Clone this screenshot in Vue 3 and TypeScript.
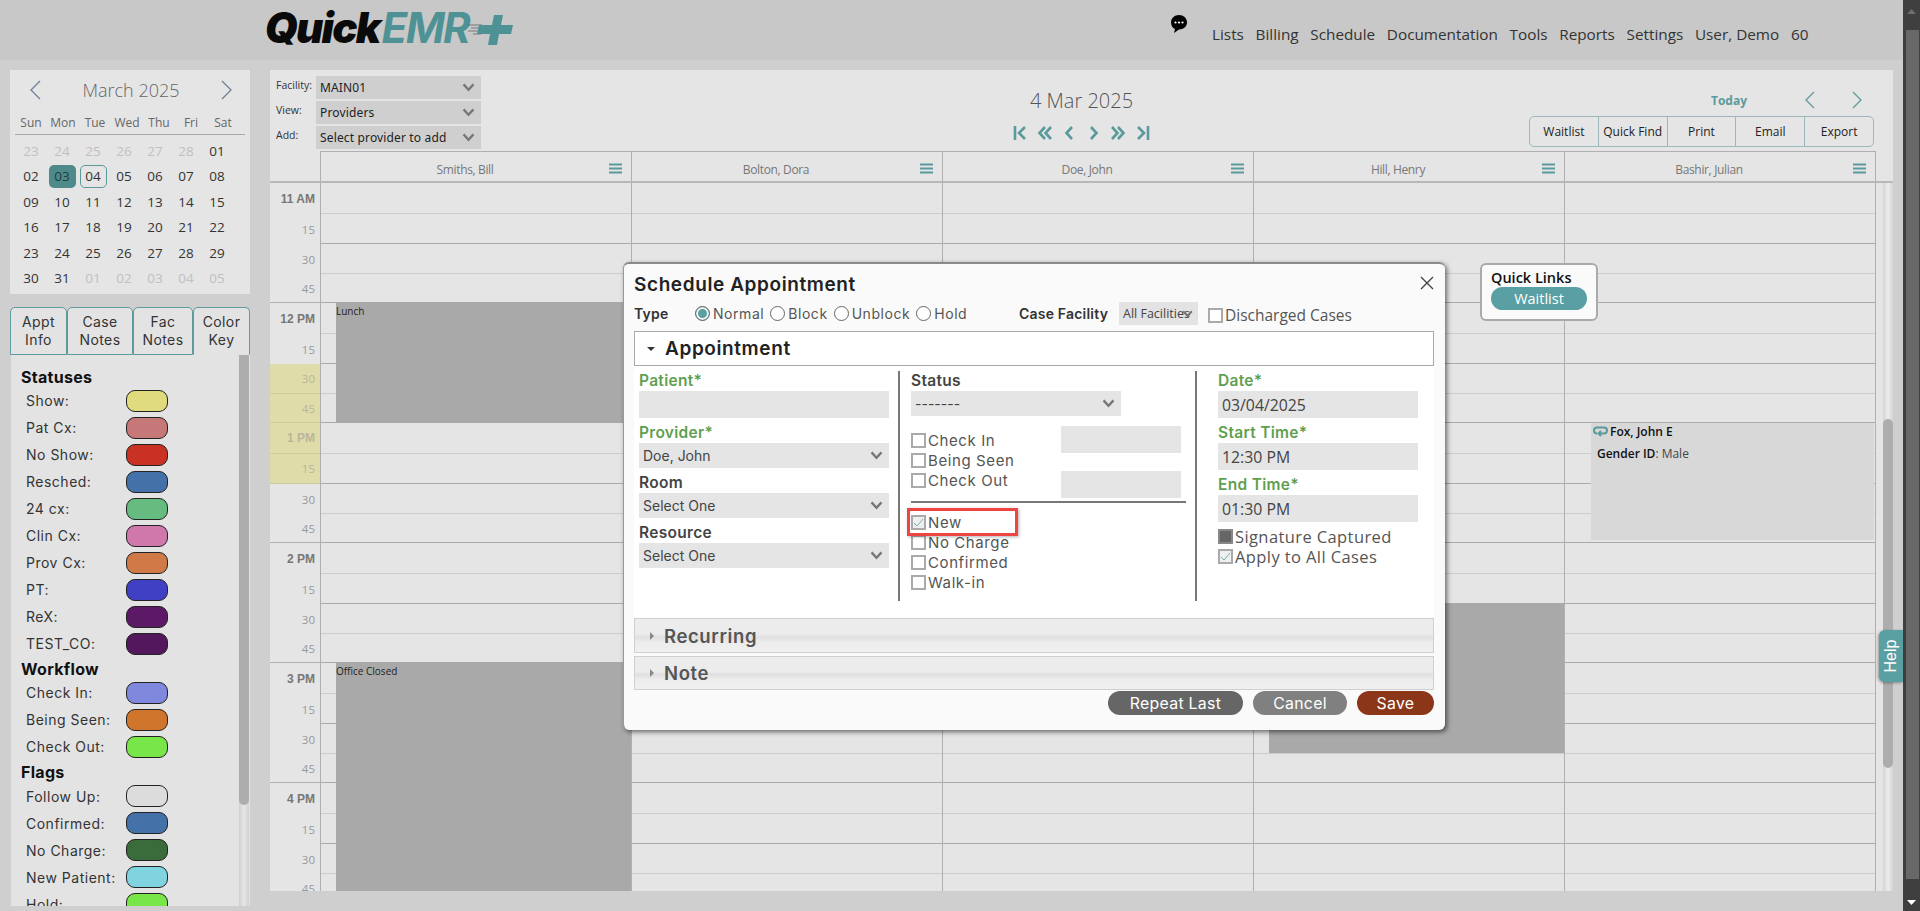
<script setup lang="ts">
const navItems: string[] = ['Lists', 'Billing', 'Schedule', 'Documentation', 'Tools', 'Reports', 'Settings', 'User, Demo', '60']
const weekDays: string[] = ['Sun', 'Mon', 'Tue', 'Wed', 'Thu', 'Fri', 'Sat']
const prev = ['23', '24', '25', '26', '27', '28']
const cur = Array.from({ length: 31 }, (_, i) => String(i + 1).padStart(2, '0'))
const next = ['01', '02', '03', '04', '05']
const days = [
  ...prev.map((d) => ({ d, cls: 'muted' })),
  ...cur.map((d) => ({ d, cls: d === '03' ? 'sel' : d === '04' ? 'today' : '' })),
  ...next.map((d) => ({ d, cls: 'muted' })),
]
const tabs: string[][] = [['Appt', 'Info'], ['Case', 'Notes'], ['Fac', 'Notes'], ['Color', 'Key']]
const keyGroups = [
  { title: 'Statuses', items: [['Show:', '#e0dc7e'], ['Pat Cx:', '#c67777'], ['No Show:', '#c93223'], ['Resched:', '#4471a8'], ['24 cx:', '#66bb80'], ['Clin Cx:', '#d077ab'], ['Prov Cx:', '#d07a48'], ['PT:', '#4040c4'], ['ReX:', '#5c1a66'], ['TEST_CO:', '#52175c']] },
  { title: 'Workflow', items: [['Check In:', '#8088dd'], ['Being Seen:', '#d0762c'], ['Check Out:', '#78e648']] },
  { title: 'Flags', items: [['Follow Up:', '#dcdcdc'], ['Confirmed:', '#4471a8'], ['No Charge:', '#3a6b3a'], ['New Patient:', '#7fd4e0'], ['Hold:', '#78e648']] },
]
const toolButtons: string[] = ['Waitlist', 'Quick Find', 'Print', 'Email', 'Export']
const providers: string[] = ['Smiths, Bill', 'Bolton, Dora', 'Doe, John', 'Hill, Henry', 'Bashir, Julian']
const hours: string[] = ['11 AM', '12 PM', '1 PM', '2 PM', '3 PM', '4 PM']
const minutes: string[] = ['', '15', '30', '45']
const rows = Array.from({ length: 24 }, (_, i) => ({
  label: i % 4 === 0 ? hours[i / 4] : minutes[i % 4],
  isHour: i % 4 === 0,
  lineCls: ['l', 'd', 'l', 'd'][i % 4],
  h: [31, 30, 30, 29][i % 4],
  yellow: i >= 6 && i <= 9,
}))
const types: string[] = ['Normal', 'Block', 'Unblock', 'Hold']
const statusChecks: string[] = ['Check In', 'Being Seen', 'Check Out']
const flagChecks: string[] = ['No Charge', 'Confirmed', 'Walk-in']
</script>

<template>
  <div class="page">
    <svg class="defs" width="0" height="0">
      <symbol id="chev" viewBox="0 0 14 10"><path d="M1.500 1.500 7 7.500l5.500-6" fill="none" stroke="#777" stroke-width="2.600" /></symbol>
    </svg>
    <div class="content">
      <header class="topbar">
        <div class="logo">
          <span class="quick">Quick</span><span class="emr">EMR</span>
          <svg class="plus" width="46" height="32" viewBox="0 0 46 32">
            <path d="M0 11h14M3 14h12M0 17h12M5 20h8" stroke="#555" stroke-width="1.200" opacity=".7" />
            <path d="M26 1h9l-2 10h12l-2 9H31l-2 11h-9l2-11H9l2-9h13z" fill="#4f9295" />
          </svg>
        </div>
        <svg class="chat" width="18" height="20" viewBox="0 0 18 20">
          <path d="M9 1C4.500 1 1 4.200 1 8.500c0 3 1.600 5.300 4 6.500L4 19l5-3.600c4.500 0 8-3 8-7C17 4.200 13.500 1 9 1z" fill="#000" />
          <circle cx="5.500" cy="8.500" r="1.100" fill="#fff" /><circle cx="9" cy="8.500" r="1.100" fill="#fff" /><circle cx="12.500" cy="8.500" r="1.100" fill="#fff" />
        </svg>
        <nav class="nav"><a v-for="n in navItems" :key="n">{{ n }}</a></nav>
      </header>

      <div class="body">
        <aside class="side">
          <section class="cal">
            <div class="cal-title">
              <svg width="14" height="22" viewBox="0 0 14 22"><path d="M12 2 3 11l9 9" fill="none" stroke="#6f7f9a" stroke-width="1.300" /></svg>
              <span>March 2025</span>
              <svg width="14" height="22" viewBox="0 0 14 22"><path d="m2 2 9 9-9 9" fill="none" stroke="#6f7f9a" stroke-width="1.300" /></svg>
            </div>
            <div class="cal-week"><span v-for="w in weekDays" :key="w">{{ w }}</span></div>
            <div class="cal-days"><span v-for="(c, i) in days" :key="i" :class="c.cls">{{ c.d }}</span></div>
          </section>

          <div class="tabs">
            <div v-for="(t, i) in tabs" :key="i" class="tab" :class="{ on: i === 3 }"><span>{{ t[0] }}</span><span>{{ t[1] }}</span></div>
          </div>
          <section class="key">
            <div class="key-list">
              <template v-for="g in keyGroups" :key="g.title">
                <h3>{{ g.title }}</h3>
                <div v-for="it in g.items" :key="it[0]" class="key-row">
                  <span>{{ it[0] }}</span>
                  <i :style="{ background: it[1] }"></i>
                </div>
              </template>
            </div>
            <div class="key-track"><div class="key-thumb"></div></div>
          </section>
        </aside>

        <main class="main">
          <div class="toolbar">
            <div class="filters">
              <div class="filter"><label>Facility:</label><div class="pick">MAIN01<svg><use href="#chev" /></svg></div></div>
              <div class="filter"><label>View:</label><div class="pick">Providers<svg><use href="#chev" /></svg></div></div>
              <div class="filter"><label>Add:</label><div class="pick">Select provider to add<svg><use href="#chev" /></svg></div></div>
            </div>
            <div class="datebox">
              <div class="date">4 Mar 2025</div>
              <div class="pager">
                <svg width="16" height="16" viewBox="-1 0 16 16"><path d="M2 1v14M12 2 6 8l6 6" fill="none" stroke="#5a9a9c" stroke-width="2.600" /></svg>
                <svg width="16" height="16" viewBox="0 0 16 16"><path d="M8 2 2.500 8 8 14M14 2 8.500 8l5.500 6" fill="none" stroke="#5a9a9c" stroke-width="2.600" /></svg>
                <svg width="16" height="16" viewBox="-3 0 16 16"><path d="M8 2 2.500 8 8 14" fill="none" stroke="#5a9a9c" stroke-width="2.600" /></svg>
                <svg width="16" height="16" viewBox="-3 0 16 16"><path d="m2 2 5.500 6L2 14" fill="none" stroke="#5a9a9c" stroke-width="2.600" /></svg>
                <svg width="16" height="16" viewBox="0 0 16 16"><path d="m2 2 5.500 6L2 14M8 2l5.500 6L8 14" fill="none" stroke="#5a9a9c" stroke-width="2.600" /></svg>
                <svg width="16" height="16" viewBox="-1 0 16 16"><path d="M12 1v14M2 2l6 6-6 6" fill="none" stroke="#5a9a9c" stroke-width="2.600" /></svg>
              </div>
            </div>
            <div class="tools">
              <div class="today-row">
                <b>Today</b>
                <svg width="12" height="20" viewBox="0 0 12 20"><path d="M10 2 2 10l8 8" fill="none" stroke="#5f9a9c" stroke-width="1.300" /></svg>
                <svg width="12" height="20" viewBox="0 0 12 20"><path d="m2 2 8 8-8 8" fill="none" stroke="#5f9a9c" stroke-width="1.300" /></svg>
              </div>
              <div class="btn-group"><span v-for="b in toolButtons" :key="b">{{ b }}</span></div>
            </div>
          </div>

          <div class="col-head">
            <div class="col-head-gap"></div>
            <div v-for="p in providers" :key="p" class="col-name">
              <span>{{ p }}</span>
              <svg width="13" height="11" viewBox="0 0 13 11"><path d="M0 1.500h13M0 5.500h13M0 9.500h13" stroke="#5a9a9c" stroke-width="1.800" /></svg>
            </div>
          </div>

          <div class="sched">
            <div class="times">
              <div v-for="(r, i) in rows" :key="i" class="time" :class="{ hour: r.isHour, yel: r.yellow, endh: i % 4 === 3 }" :style="{ height: r.h + 'px' }">{{ r.label }}</div>
            </div>
            <div v-for="(p, c) in providers" :key="p" class="column">
              <div v-for="(r, i) in rows" :key="i" class="slot" :class="r.lineCls" :style="{ height: r.h + 'px' }"></div>
              <template v-if="c === 0">
                <div class="block lunch">Lunch</div>
                <div class="block closed">Office Closed</div>
              </template>
              <div v-if="c === 3" class="block hill"></div>
              <div v-if="c === 4" class="fox">
                <div class="fox-name">
                  <svg width="15" height="12" viewBox="0 0 15 12"><path d="M4 1.500h7a3 3 0 0 1 0 6H6M8 5 5.500 7.500 8 10M4 7.500a3 3 0 0 1 0-6" fill="none" stroke="#5a9a9c" stroke-width="2" /></svg>
                  <b>Fox, John E</b>
                </div>
                <div class="fox-gen"><b>Gender ID</b>: Male</div>
              </div>
            </div>
            <div class="gutter"></div>
            <div class="track"><div class="thumb"></div></div>
          </div>
        </main>
      </div>
    </div>

    <div class="winbar">
      <div class="win-up"><svg width="9" height="5" viewBox="0 0 9 5"><path d="M4.500 0 9 5H0z" fill="#6e6e6e" /></svg></div>
      <div class="win-thumb"></div>
      <div class="win-down"><svg width="9" height="5" viewBox="0 0 9 5"><path d="M4.500 5 9 0H0z" fill="#fff" /></svg></div>
    </div>

    <div class="quick-links">
      <b>Quick Links</b>
      <span>Waitlist</span>
    </div>
    <div class="help"><span>Help</span></div>

    <div class="modal">
      <h2>Schedule Appointment</h2>
      <svg class="close" width="14" height="14" viewBox="0 0 14 14"><path d="m1 1 12 12M13 1 1 13" stroke="#444" stroke-width="1.400" /></svg>
      <div class="type-row">
        <b class="type-l">Type</b>
        <div class="radios">
          <span v-for="(t, i) in types" :key="t" class="radio"><i :class="{ on: i === 0 }"></i>{{ t }}</span>
        </div>
        <b class="fac-l">Case Facility</b>
        <div class="fac-sel">All Facilities<svg><use href="#chev" /></svg></div>
        <span class="chk dis"><i></i>Discharged Cases</span>
      </div>
      <div class="acc-open"><i class="tri-d"></i>Appointment</div>
      <div class="acc-body">
        <div class="c1">
          <label class="req">Patient*</label>
          <div class="fld t"></div>
          <label class="req gap4">Provider*</label>
          <div class="fld s">Doe, John<svg><use href="#chev" /></svg></div>
          <label class="blk">Room</label>
          <div class="fld s">Select One<svg><use href="#chev" /></svg></div>
          <label class="blk">Resource</label>
          <div class="fld s">Select One<svg><use href="#chev" /></svg></div>
        </div>
        <div class="c2">
          <label class="blk0">Status</label>
          <div class="fld s stat">-------<svg><use href="#chev" /></svg></div>
          <div class="st-grid">
            <div class="st-checks"><span v-for="s in statusChecks" :key="s" class="chk"><i></i>{{ s }}</span></div>
            <div class="st-inputs"><div class="fld t"></div><div class="fld t"></div></div>
          </div>
          <div class="hr"></div>
          <div class="flags">
            <span class="chk"><i class="tick"><svg width="11" height="9" viewBox="0 0 11 9"><path d="m1 5 3 3 6-7" fill="none" stroke="#6fb5b8" stroke-width="1" /></svg></i>New</span>
            <div class="redbox"></div>
            <span v-for="f in flagChecks" :key="f" class="chk"><i></i>{{ f }}</span>
          </div>
        </div>
        <div class="c3">
          <label class="req">Date*</label>
          <div class="fld t v">03/04/2025</div>
          <label class="req gap4">Start Time*</label>
          <div class="fld t v">12:30 PM</div>
          <label class="req gap4">End Time*</label>
          <div class="fld t v">01:30 PM</div>
          <div class="c3-checks">
            <span class="chk"><i class="solid"></i>Signature Captured</span>
            <span class="chk"><i class="tick"><svg width="11" height="9" viewBox="0 0 11 9"><path d="m1 5 3 3 6-7" fill="none" stroke="#6fb5b8" stroke-width="1" /></svg></i>Apply to All Cases</span>
          </div>
        </div>
      </div>
      <div class="acc-closed first"><i class="tri-r"></i>Recurring</div>
      <div class="acc-closed"><i class="tri-r"></i>Note</div>
      <div class="actions">
        <button class="rep">Repeat Last</button>
        <button class="can">Cancel</button>
        <button class="sav">Save</button>
      </div>
    </div>
  </div>
</template>

<style>
html, body { margin: 0; padding: 0; overflow: hidden; }
</style>

<style scoped>
.page { position: relative; display: flex; width: 1920px; height: 911px; overflow: hidden; background: #cfcfcf; font-family: "Open Sans", sans-serif; color: #333; }
.defs { position: absolute; }
.content { width: 1903px; flex: none; display: flex; flex-direction: column; }

.topbar { height: 60px; flex: none; background: #c8c8c8; display: flex; align-items: flex-start; padding-left: 265px; box-sizing: border-box; }
.logo { display: flex; align-items: center; height: 60px; width: 250px; flex: none; font-family: Inter, sans-serif; font-style: italic; font-size: 42px; line-height: 1; letter-spacing: -1.700px; padding-bottom: 4px; box-sizing: border-box; }
.quick { font-weight: 900; color: #0a0a0a; }
.emr { font-weight: 700; color: #4f9295; margin-left: 2px; }
.plus { flex: none; margin-left: -1px; margin-top: 4px; }
.chat { margin-left: 655px; margin-top: 14px; flex: none; }
.nav { display: flex; gap: 11.700px; margin-left: 24px; margin-top: 23px; font-size: 15.300px; line-height: 22px; color: #333; white-space: nowrap; }

.body { display: flex; align-items: flex-start; padding: 10px 10px 0; }
.side { width: 240px; flex: none; margin-right: 20px; display: flex; flex-direction: column; }
.cal { height: 224px; background: #e5e5e5; box-sizing: border-box; padding: 0 5px; }
.cal-title { height: 40px; display: flex; align-items: center; justify-content: space-between; padding: 0 11px 0 13px; box-sizing: border-box; font-size: 18px; font-weight: 300; color: #666; }
.cal-week { display: flex; height: 25px; border-bottom: 1px solid #aaa; font-size: 12px; color: #666; padding: 3px 0 0; line-height: 20px; box-sizing: border-box; }
.cal-week span { width: 32px; text-align: center; flex: none; }
.cal-days { display: grid; grid-template-columns: repeat(7, 31px); grid-auto-rows: 25.500px; margin: 3px 0 0 0.500px; font-size: 13.500px; color: #333; }
.cal-days span { display: flex; align-items: center; justify-content: center; box-sizing: border-box; margin: 1px 2px; border-radius: 5px; }
.cal-days .muted { color: #c0c0c0; }
.cal-days .sel { background: #4f8a8b; color: #1e3e3e; }
.cal-days .today { border: 1px solid #5a9a9c; }

.tabs { display: flex; margin-top: 13px; height: 48px; }
.tab { box-sizing: border-box; border: 1px solid #5f9a9c; border-radius: 5px 5px 0 0; display: flex; flex-direction: column; align-items: center; justify-content: center; font-family: Inter, sans-serif; font-size: 14px; line-height: 18px; letter-spacing: .4px; color: #333; background: #e3e3e3; }
.tab:nth-child(1) { width: 57px; }
.tab:nth-child(2) { width: 66px; }
.tab:nth-child(3) { width: 60px; }
.tab:nth-child(4) { width: 57px; }
.tab.on { border-bottom-color: #e3e3e3; }
.key { height: 551px; background: #e3e3e3; margin-left: 1px; display: flex; overflow: hidden; }
.key-list { flex: 1; padding: 10px 0 0 10px; font-family: Inter, sans-serif; }
.key-list h3 { margin: 0; font-size: 16px; font-weight: 700; line-height: 24px; height: 22.200px; color: #111; letter-spacing: .3px; }
.key-row { display: flex; height: 27px; align-items: center; padding-left: 5px; font-size: 14px; letter-spacing: .5px; color: #333; }
.key-row span { width: 100px; flex: none; }
.key-row i { width: 42px; height: 22px; box-sizing: border-box; border: 1.500px solid #222; border-radius: 9px; }
.key-track { width: 10px; margin-right: 1px; background: linear-gradient(90deg, #d0d0d0, #e6e6e6 50%, #d0d0d0); flex: none; }
.key-thumb { height: 450px; background: #adadad; border-radius: 0 0 5px 5px; }

.main { width: 1623px; height: 821px; flex: none; background: #e5e5e5; display: flex; flex-direction: column; }
.toolbar { height: 81px; flex: none; display: grid; grid-template-columns: 1fr auto 1fr; }
.filters { padding: 6px 0 0 6px; display: flex; flex-direction: column; gap: 2px; }
.filter { display: flex; height: 23px; }
.filter label { width: 40px; font-size: 10.500px; line-height: 18px; color: #333; flex: none; }
.pick { width: 165px; background: #cfcfcf; display: flex; align-items: center; justify-content: space-between; padding: 0 6px 0 4px; box-sizing: border-box; font-family: "Noto Sans", sans-serif; font-size: 12px; color: #222; letter-spacing: .15px; }
.pick svg { width: 13px; height: 9px; flex: none; }
.datebox { display: flex; flex-direction: column; align-items: center; padding-top: 16px; }
.date { font-size: 20px; font-weight: 300; line-height: 30px; color: #555; }
.pager { display: flex; align-items: center; gap: 8.600px; margin-top: 9px; }
.tools { display: flex; flex-direction: column; align-items: flex-end; padding-right: 19px; }
.today-row { display: flex; align-items: center; height: 46px; padding: 14px 11px 0 0; box-sizing: border-box; }
.today-row b { font-size: 12px; color: #5a9a9c; margin-right: 57px; }
.today-row svg + svg { margin-left: 35px; }
.btn-group { display: flex; width: 345px; height: 31px; box-sizing: border-box; border: 1px solid #9cb8ba; border-radius: 5px; }
.btn-group span { flex: 1; display: flex; align-items: center; justify-content: center; font-size: 12px; color: #222; }
.btn-group span + span { border-left: 1px solid #9cb8ba; }

.col-head { display: flex; height: 32px; flex: none; border-bottom: 2px solid #b8b8b8; box-sizing: border-box; }
.col-head-gap { width: 51px; flex: none; border-right: 1px solid #b0b0b0; box-sizing: border-box; }
.col-name { width: 311px; flex: none; box-sizing: border-box; border-top: 1px solid #b0b0b0; border-right: 1px solid #b0b0b0; display: flex; align-items: center; justify-content: center; position: relative; font-size: 12px; letter-spacing: -.35px; color: #777; padding: 5px 22px 0 0; }
.col-name svg { position: absolute; right: 9px; top: 11px; }

.sched { flex: 1; display: flex; overflow: hidden; }
.times { width: 51px; flex: none; box-sizing: border-box; border-right: 1px solid #b0b0b0; }
.time { box-sizing: border-box; display: flex; align-items: center; justify-content: flex-end; padding-right: 5px; font-size: 11.500px; color: #999; }
.time.hour { font-family: "Liberation Sans", sans-serif; font-weight: 700; font-size: 12px; color: #777; }
.time.endh { border-bottom: 1px solid #b0b0b0; }
.time.yel { background: #e0dcaa; color: #b9b69a; border-bottom: 1px solid #cfcb9c; }
.column { width: 311px; flex: none; position: relative; box-sizing: border-box; border-right: 1px solid #b0b0b0; }
.slot { box-sizing: border-box; }
.slot.l { border-bottom: 1px solid #ccc; }
.slot.d { border-bottom: 1px solid #aaa; }
.block { position: absolute; left: 15px; right: 0; background: #a9a9a9; font-size: 10px; line-height: 14px; color: #222; }
.lunch { top: 119px; height: 120px; padding-top: 2px; box-sizing: border-box; }
.closed { top: 479px; height: 240px; padding-top: 2px; box-sizing: border-box; }
.hill { top: 420px; height: 150px; }
.fox { position: absolute; top: 240px; left: 26px; right: 1px; height: 117px; background: #d8d8d8; font-size: 12px; color: #222; }
.fox-name { display: flex; align-items: center; gap: 2px; height: 17px; padding-left: 2px; }
.fox-name b { font-weight: 600; color: #111; }
.fox-gen { padding: 5px 0 0 6px; color: #444; font-size: 12px; }
.fox-gen b { font-weight: 600; color: #111; }
.gutter { width: 7px; flex: none; }
.track { width: 10px; flex: none; background: linear-gradient(90deg, #d4d4d4, #ececec 50%, #d4d4d4); }
.thumb { margin-top: 236px; height: 349px; background: #adadad; border-radius: 5px; }

.winbar { width: 17px; flex: none; background: #3f3f3f; display: flex; flex-direction: column; align-items: center; }
.win-up { height: 30px; width: 100%; display: flex; align-items: center; justify-content: center; padding-bottom: 8px; box-sizing: border-box; }
.win-thumb { flex: 1; width: 13px; background: #686868; margin-left: 2px; }
.win-down { height: 32px; width: 100%; display: flex; align-items: center; justify-content: center; padding-top: 14px; box-sizing: border-box; }

.quick-links { position: absolute; left: 1480px; top: 263px; width: 118px; height: 58px; box-sizing: border-box; background: #fafafa; border: 2px solid #aaa; border-radius: 6px; padding: 4px 9px; display: flex; flex-direction: column; }
.quick-links b { font-size: 14.500px; line-height: 18px; color: #111; font-weight: 600; white-space: nowrap; }
.quick-links span { width: 96px; height: 23px; border-radius: 12px; background: #5a9fa3; color: #fff; font-size: 14.500px; display: flex; align-items: center; justify-content: center; }
.help { position: absolute; left: 1879px; top: 630px; width: 24px; height: 52px; background: #5aa0a3; border-radius: 6px 0 0 6px; box-shadow: -1px 1px 3px rgba(0,0,0,.35); display: flex; align-items: center; justify-content: center; }
.help span { transform: rotate(-90deg); font-family: "Liberation Sans", sans-serif; font-size: 16px; color: #fff; }

.modal { position: absolute; left: 623px; top: 262px; width: 822px; height: 468px; box-sizing: border-box; background: #fafafa; border-radius: 6px; border-top: 2px solid #8a8a8a; border-left: 1px solid #999; box-shadow: 2px 2px 5px rgba(0,0,0,.55); padding: 10px 11px 0 10px; font-family: Inter, sans-serif; color: #333; }
.modal h2 { margin: 0; font-size: 19px; line-height: 22px; font-weight: 600; letter-spacing: .6px; color: #222; white-space: nowrap; }
.close { position: absolute; right: 11px; top: 12px; }
.type-row { position: relative; display: flex; align-items: center; height: 22px; margin-top: 6px; font-size: 14px; }
.type-l { font-weight: 600; width: 61px; flex: none; color: #333; letter-spacing: .2px; }
.radios { display: flex; gap: 6px; width: 324px; flex: none; color: #555; letter-spacing: .55px; }
.radio { display: flex; align-items: center; gap: 3px; }
.radio i { width: 15px; height: 15px; box-sizing: border-box; border: 1px solid #666; border-radius: 50%; background: #fff; display: block; }
.radio i.on { background: #5aa0a3; box-shadow: inset 0 0 0 2px #f2f2f2; border-color: #666; }
.fac-l { font-weight: 600; width: 100px; flex: none; letter-spacing: .2px; }
.fac-sel { position: relative; width: 79px; height: 23px; flex: none; background: #e3e3e3; display: flex; align-items: center; padding-left: 4px; box-sizing: border-box; font-family: "Open Sans", sans-serif; font-size: 12.500px; color: #444; white-space: nowrap; overflow: hidden; }
.fac-sel svg { position: absolute; right: 5px; top: 8px; width: 11px; height: 8px; }
.chk { display: flex; align-items: center; height: 20px; font-size: 15px; letter-spacing: .6px; color: #555; white-space: nowrap; }
.chk > i { width: 15px; height: 15px; flex: none; box-sizing: border-box; border: 2px solid #aaa; background: #fff; margin-right: 2px; display: flex; align-items: center; justify-content: center; }
.chk > i.tick { background: #efefef; }
.chk > i.solid { background: #666; border-color: #888; }
.dis { margin-left: 10px; font-family: "Open Sans", sans-serif; font-size: 15.500px; letter-spacing: 0; padding-top: 4px; }
.acc-open { height: 35px; margin-top: 7px; box-sizing: border-box; border: 1px solid #aaa; background: #fff; display: flex; align-items: center; font-size: 19px; font-weight: 600; color: #222; letter-spacing: .6px; padding-left: 12px; }
.tri-d { width: 0; height: 0; border: 4px solid transparent; border-top: 4px solid #333; border-bottom: 0; margin-right: 10px; }
.acc-body { display: flex; height: 251px; background: #fff; padding-top: 5px; box-sizing: border-box; }
.acc-body label { display: block; font-weight: 600; font-size: 15.500px; letter-spacing: .3px; }
.req { color: #5f9f50; height: 20px; line-height: 20px; }
.gap4 { margin-top: 4px; height: 21px !important; line-height: 21px !important; }
.blk { color: #444; height: 25px; line-height: 30px; }
.blk0 { color: #444; height: 20px; line-height: 20px; }
.fld { background: #e5e5e5; box-sizing: border-box; font-size: 14px; color: #444; display: flex; align-items: center; justify-content: space-between; padding: 0 6px 0 4px; }
.fld svg { width: 13px; height: 9px; flex: none; }
.fld.t { height: 27px; }
.fld.s { height: 25px; }
.c1 { width: 266px; height: 230px; box-sizing: border-box; padding-left: 5px; padding-right: 9px; border-right: 2px solid #777; flex: none; }
.c2 { width: 297px; height: 230px; box-sizing: border-box; padding-left: 11px; padding-right: 9px; border-right: 2px solid #777; flex: none; }
.c3 { flex: 1; height: 230px; padding: 0 16px 0 21px; box-sizing: border-box; }
.c3 .v { font-family: "Open Sans", sans-serif; font-size: 15.800px; }
.stat { width: 210px; }
.st-grid { display: flex; justify-content: space-between; height: 72px; margin-top: 10px; }
.st-checks { display: flex; flex-direction: column; padding-top: 5px; }
.st-checks .chk { height: 19.700px; }
.st-inputs { width: 120px; margin-right: 5px; display: flex; flex-direction: column; justify-content: space-between; }
.hr { height: 2px; background: #777; margin: 3px 0 0; width: 275px; }
.flags { position: relative; display: flex; flex-direction: column; padding-top: 9.500px; }
.flags .chk { height: 20px; }
.redbox { position: absolute; left: -4px; top: 5px; width: 111px; height: 28px; box-sizing: border-box; border: 3px solid #ee4444; box-shadow: 1px 1px 3px rgba(0,0,0,.3); }
.c3-checks { display: flex; flex-direction: column; margin-top: 4px; }
.c3-checks .chk { font-family: "Open Sans", sans-serif; font-size: 16.500px; letter-spacing: .4px; }
.acc-closed { height: 34px; box-sizing: border-box; margin-top: 3px; border: 1px solid #d0d0d0; background: linear-gradient(180deg, #ececec 0, #ececec 45%, #e0e0e0 55%, #ececec 70%, #f0f0f0 100%); display: flex; align-items: center; padding-left: 15px; font-size: 18.500px; font-weight: 600; color: #555; letter-spacing: .6px; }
.acc-closed.first { height: 35px; margin-top: 1px; }
.tri-r { width: 0; height: 0; border: 4px solid transparent; border-left: 4px solid #888; border-right: 0; margin-right: 10px; }
.actions { display: flex; justify-content: flex-end; gap: 10px; margin-top: 1px; }
.actions button { height: 24px; border: 0; border-radius: 12px; padding: 0; color: #fff; font-family: Inter, sans-serif; font-size: 15.800px; letter-spacing: .3px; }
.rep { width: 135px; background: #666; }
.can { width: 94px; background: #808080; }
.sav { width: 77px; background: #8b3619; }
</style>
